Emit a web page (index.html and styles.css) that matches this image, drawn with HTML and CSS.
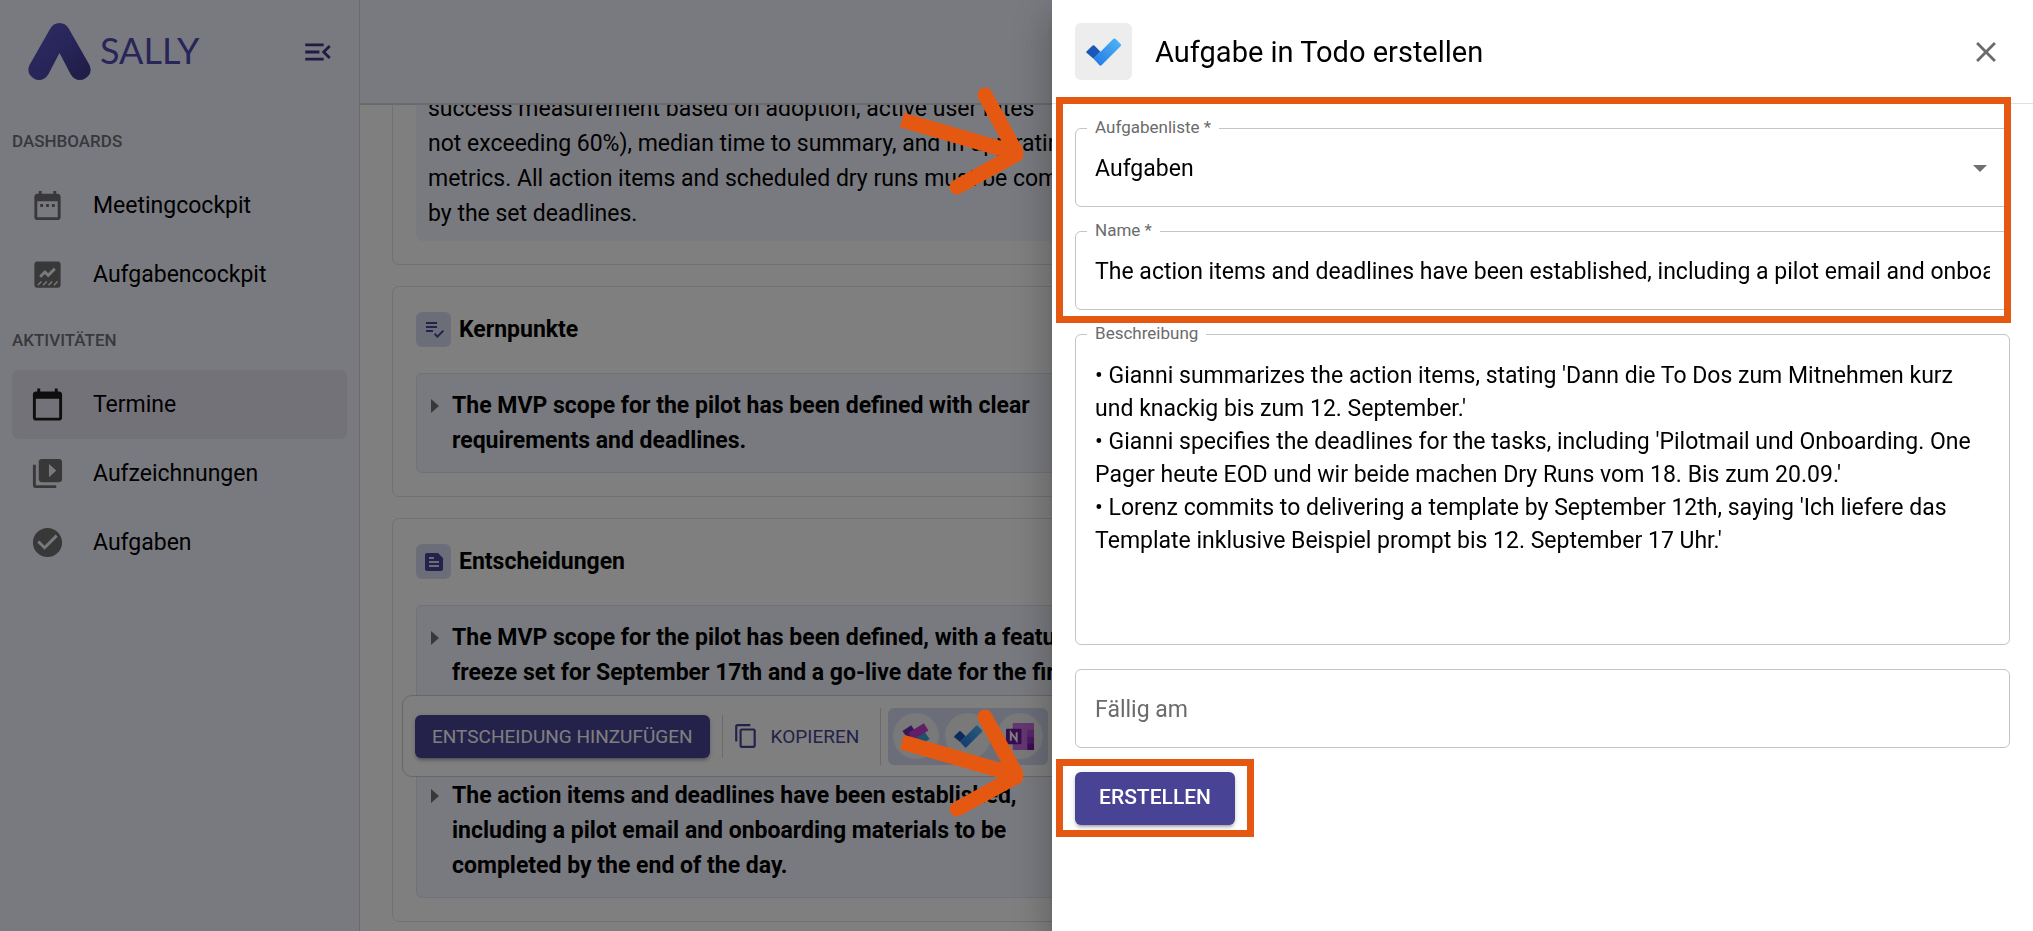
FILE: index.html
```html
<!DOCTYPE html>
<html lang="de">
<head>
    <meta charset="UTF-8">
    <meta name="viewport" content="width=device-width, initial-scale=1.0">
    <title>Sally - Aufgabe in Todo erstellen</title>
    <link rel="stylesheet" href="styles.css">
</head>
<body>
    <div class="app">
        <!-- Sidebar -->
        <aside class="sidebar">
            <div class="sidebar-head">
                <a href="#" class="brand">
                    <svg class="brand-mark" viewBox="0 0 63 57" aria-hidden="true">
                        <defs>
                            <linearGradient id="brandGradient" x1="0" y1="0" x2="1" y2="1">
                                <stop offset="0" stop-color="#5b58c4"/>
                                <stop offset="0.5" stop-color="#504ab4"/>
                                <stop offset="1" stop-color="#3e3788"/>
                            </linearGradient>
                        </defs>
                        <path fill="url(#brandGradient)" d="M22 6Q25 0 31.500 0Q38 0 41 6L61.500 42Q64 48 61 52Q57 57 52 57Q46 57 42.500 51L31.500 30L20.500 51Q17 57 11 57Q6 57 2 52Q-1 48 1.500 42Z"/>
                    </svg>
                    <span class="brand-name">SALLY</span>
                </a>
                <button type="button" class="icon-button collapse" aria-label="Menü einklappen">
                    <svg viewBox="0 0 24 24"><path d="M3 18h13v-2H3v2zm0-5h10v-2H3v2zm0-7v2h13V6H3zm18 9.590L17.420 12 21 8.410 19.590 7l-5 5 5 5L21 15.590z"/></svg>
                </button>
            </div>

            <nav>
                <h2 class="nav-title">DASHBOARDS</h2>
                <a href="#" class="nav-item">
                    <svg viewBox="0 0 24 24"><path d="M9 11H7v2h2v-2zm4 0h-2v2h2v-2zm4 0h-2v2h2v-2zm2-7h-1V2h-2v2H8V2H6v2H5c-1.110 0-1.990.9-1.990 2L3 20c0 1.100.890 2 2 2h14c1.100 0 2-.9 2-2V6c0-1.100-.9-2-2-2zm0 16H5V9h14v11z"/></svg>
                    Meetingcockpit
                </a>
                <a href="#" class="nav-item">
                    <svg viewBox="0 0 24 24">
                        <rect x="3" y="3" width="18" height="18" rx="2"/>
                        <path class="cut" d="M7 13.500l3.200-3.200 2.300 2.300L17 8"/>
                        <path class="cut thin" d="M5.300 19.300l2.500-2.500M9 19.300l2.500-2.500M12.700 19.300l2.500-2.500M16.400 19.300l2.500-2.500"/>
                    </svg>
                    Aufgabencockpit
                </a>
                <h2 class="nav-title">AKTIVITÄTEN</h2>
                <a href="#" class="nav-item active">
                    <svg viewBox="0 0 24 24"><path d="M20 3h-1V1h-2v2H7V1H5v2H4c-1.100 0-2 .9-2 2v16c0 1.100.9 2 2 2h16c1.100 0 2-.9 2-2V5c0-1.100-.9-2-2-2zm0 18H4V8h16v13z"/></svg>
                    Termine
                </a>
                <a href="#" class="nav-item">
                    <svg viewBox="0 0 24 24"><path d="M4 6H2v14c0 1.100.9 2 2 2h14v-2H4V6zm16-4H8c-1.100 0-2 .9-2 2v12c0 1.100.9 2 2 2h12c1.100 0 2-.9 2-2V4c0-1.100-.9-2-2-2zm-7 12.500v-9l5 4.500-5 4.500z"/></svg>
                    Aufzeichnungen
                </a>
                <a href="#" class="nav-item">
                    <svg viewBox="0 0 24 24"><path d="M12 2C6.480 2 2 6.480 2 12s4.480 10 10 10 10-4.480 10-10S17.520 2 12 2zm-2 15l-5-5 1.410-1.410L10 14.170l7.590-7.590L19 8l-9 9z"/></svg>
                    Aufgaben
                </a>
            </nav>
        </aside>

        <!-- Meeting summary -->
        <main class="content">
            <div class="topbar"></div>
            <div class="cards">
                <section class="card summary">
                    <p class="panel plain">
                        success measurement based on adoption, active user rates<br>
                        not exceeding 60%), median time to summary, and in-app rating<br>
                        metrics. All action items and scheduled dry runs must be completed<br>
                        by the set deadlines.
                    </p>
                </section>

                <section class="card">
                    <h3 class="card-title">
                        <span class="tile">
                            <svg viewBox="0 0 24 24"><path d="M14 10H3v2h11v-2zm0-4H3v2h11V6zM3 16h7v-2H3v2zm11.410 6L10.900 18.500l1.400-1.400 2.110 2.100 5.300-5.300 1.400 1.400L14.410 22z" transform="translate(1 -2)"/></svg>
                        </span>
                        Kernpunkte
                    </h3>
                    <div class="panel">
                        <div class="point">
                            <span class="caret"></span>
                            <p>The MVP scope for the pilot has been defined with clear<br>requirements and deadlines.</p>
                        </div>
                    </div>
                </section>

                <section class="card">
                    <h3 class="card-title">
                        <span class="tile">
                            <svg viewBox="0 0 24 24"><path d="M16 3H5c-1.100 0-2 .9-2 2v14c0 1.100.9 2 2 2h14c1.100 0 2-.9 2-2V8l-5-5zM7 7h5v2H7V7zm10 10H7v-2h10v2zm0-4H7v-2h10v2z"/></svg>
                        </span>
                        Entscheidungen
                    </h3>
                    <div class="panel">
                        <div class="point">
                            <span class="caret"></span>
                            <p>The MVP scope for the pilot has been defined, with a feature<br>freeze set for September 17th and a go-live date for the first</p>
                        </div>
                        <div class="point later">
                            <span class="caret"></span>
                            <p>The action items and deadlines have been established,<br>including a pilot email and onboarding materials to be<br>completed by the end of the day.</p>
                        </div>
                    </div>

                    <!-- Floating actions of the hovered decision -->
                    <div class="toolbar">
                        <button type="button" class="button add">ENTSCHEIDUNG HINZUFÜGEN</button>
                        <span class="divider"></span>
                        <button type="button" class="copy">
                            <svg viewBox="0 0 24 24"><path d="M16 1H4c-1.100 0-2 .9-2 2v14h2V3h12V1zm3 4H8c-1.100 0-2 .9-2 2v14c0 1.100.9 2 2 2h11c1.100 0 2-.9 2-2V7c0-1.100-.9-2-2-2zm0 16H8V7h11v14z"/></svg>
                            KOPIEREN
                        </button>
                        <span class="divider tall"></span>
                        <div class="exports">
                            <button type="button" class="export" aria-label="Loop">
                                <svg viewBox="0 0 30 30">
                                    <g stroke-width="9">
                                        <path stroke="#8b3fd0" d="M4 14l10 9"/>
                                        <path stroke="#6a2fb5" d="M3 13l9-6"/>
                                        <path stroke="#35a6dd" d="M13 23l13-9"/>
                                        <path stroke="#c43fd0" d="M9 15L25 5"/>
                                    </g>
                                </svg>
                            </button>
                            <button type="button" class="export" aria-label="Todo">
                                <svg viewBox="0 0 36 28"><use href="#todoMark"/></svg>
                            </button>
                            <button type="button" class="export" aria-label="OneNote">
                                <svg viewBox="0 0 30 30">
                                    <rect x="7" y="1" width="22" height="28" rx="1" fill="#c86ee0"/>
                                    <path fill="#ae4bd5" d="M22 8h7v7h-7z"/>
                                    <path fill="#9332bf" d="M22 15h7v7h-7z"/>
                                    <path fill="#7719aa" d="M22 22h7v7h-7z"/>
                                    <rect x="0" y="7" width="16" height="16" rx="1" fill="#6b1a9c"/>
                                    <path fill="none" stroke="#fff" stroke-width="2" d="M5 19.500V11l6 8V10.500"/>
                                </svg>
                            </button>
                        </div>
                    </div>
                </section>
            </div>
        </main>
    </div>

    <div class="backdrop"></div>

    <!-- Create task drawer -->
    <aside class="drawer">
        <header class="drawer-head">
            <span class="app-icon">
                <svg viewBox="0 0 36 28">
                    <defs>
                        <linearGradient id="todoLong" x1="0" y1="1" x2="1" y2="0">
                            <stop offset="0" stop-color="#2176e4"/>
                            <stop offset="1" stop-color="#52b9f5"/>
                        </linearGradient>
                    </defs>
                    <g id="todoMark">
                        <path fill="#1957b8" d="M0.500 13.500L6.300 7.700Q7.500 6.800 8.600 7.700L14.500 13.800L7.600 20.700L0.500 14.800Q0 14.200 0.500 13.500Z"/>
                        <path fill="url(#todoLong)" d="M7.600 20.700L27.400 0.800Q28.500 0 29.500 0.800L34.800 6.200Q35.500 7 34.800 8L15.500 27.300Q14.500 28 13.500 27.300Z"/>
                    </g>
                </svg>
            </span>
            <h1>Aufgabe in Todo erstellen</h1>
            <button type="button" class="icon-button close" aria-label="Schließen">
                <svg viewBox="0 0 24 24"><path d="M19 6.410L17.590 5 12 10.590 6.410 5 5 6.410 10.590 12 5 17.590 6.410 19 12 13.410 17.590 19 19 17.590 13.410 12z"/></svg>
            </button>
        </header>

        <form class="task-form">
            <div class="required-fields">
                <div class="field">
                    <label for="list">Aufgabenliste *</label>
                    <select id="list">
                        <option>Aufgaben</option>
                    </select>
                    <span class="select-arrow"></span>
                </div>
                <div class="field">
                    <label for="name">Name *</label>
                    <input type="text" id="name" value="The action items and deadlines have been established, including a pilot email and onboarding materials to be completed by the end of the day.">
                </div>
                <div class="highlight highlight-fields"></div>
                <svg class="arrow" viewBox="0 0 126 112" aria-hidden="true"><path d="M5 34L119 67"/><path class="head" d="M88 9L120 68L60 101"/></svg>
            </div>

            <div class="field">
                <label for="description">Beschreibung</label>
                <textarea id="description" rows="8">• Gianni summarizes the action items, stating 'Dann die To Dos zum Mitnehmen kurz und knackig bis zum 12. September.'
• Gianni specifies the deadlines for the tasks, including 'Pilotmail und Onboarding. One Pager heute EOD und wir beide machen Dry Runs vom 18. Bis zum 20.09.'
• Lorenz commits to delivering a template by September 12th, saying 'Ich liefere das Template inklusive Beispiel prompt bis 12. September 17 Uhr.'</textarea>
            </div>

            <div class="field">
                <input type="text" placeholder="Fällig am" aria-label="Fällig am">
            </div>

            <div class="submit">
                <button type="submit" class="button create">ERSTELLEN</button>
                <div class="highlight highlight-submit"></div>
                <svg class="arrow" viewBox="0 0 126 112" aria-hidden="true"><path d="M5 34L119 67"/><path class="head" d="M88 9L120 68L60 101"/></svg>
            </div>
        </form>
    </aside>
</body>
</html>
```
FILE: styles.css
```css
/* General Reset */
* {
    margin: 0;
    padding: 0;
    box-sizing: border-box;
}

body {
    font-family: Roboto, "Liberation Sans", sans-serif;
    font-size: 23px;
    color: #000;
    background-color: #fff;
    height: 100vh;
    overflow: hidden;
}

button,
input,
select,
textarea {
    font: inherit;
    color: inherit;
}

button {
    border: none;
    background: none;
    cursor: pointer;
}

svg {
    display: block;
    flex: none;
    fill: currentColor;
}

.app {
    display: flex;
    height: 100vh;
}

/* Sidebar */
.sidebar {
    flex: none;
    width: 360px;
    padding: 0 12px;
    background-color: #f3f5ff;
    border-right: 1px solid #d4d4d4;
}

.sidebar-head {
    display: flex;
    align-items: center;
    justify-content: space-between;
    height: 103px;
    margin-bottom: 7px;
    padding: 0 12px 0 16px;
}

.brand {
    display: flex;
    align-items: center;
    gap: 9px;
    color: #504ab4;
    text-decoration: none;
}

.brand-mark {
    width: 63px;
    height: 57px;
}

.brand-name {
    padding-bottom: 4px;
    font-family: Lato, sans-serif;
    font-size: 36px;
    line-height: 40px;
}

.icon-button svg {
    width: 34px;
    height: 34px;
}

.collapse {
    color: #3e3788;
}

.nav-title {
    height: 61px;
    font-size: 17px;
    font-weight: 500;
    line-height: 62px;
    color: #707078;
}

.nav-item {
    display: flex;
    align-items: center;
    gap: 28px;
    height: 69px;
    padding: 0 18px;
    border-radius: 6px;
    color: #000;
    text-decoration: none;
}

.nav-item svg {
    width: 35px;
    height: 35px;
    color: #707070;
}

.nav-item.active {
    background-color: #e9e5f3;
}

.nav-item.active svg {
    color: #1c1c1c;
}

.cut {
    fill: none;
    stroke: #f3f5ff;
    stroke-width: 2;
}

.thin {
    stroke-width: 1;
}

/* Content */
.content {
    flex: 1;
    min-width: 0;
    display: flex;
    flex-direction: column;
}

.topbar {
    flex: none;
    height: 105px;
    background-color: #f3f5ff;
    border-bottom: 2px solid #d4d4d8;
}

.cards {
    flex: 1;
    min-height: 0;
    overflow: hidden;
    display: flex;
    flex-direction: column;
    gap: 21px;
    padding: 0 32px;
    white-space: nowrap;
}

.card {
    flex: none;
    position: relative;
    padding: 25px 23px 23px;
    border: 1px solid #e2e2e2;
    border-radius: 7px;
}

.summary {
    padding-top: 0;
    margin-top: -14px;
    border-top: none;
}

.card-title {
    display: flex;
    align-items: center;
    gap: 8px;
    margin-bottom: 26px;
    font-size: 23px;
    font-weight: 700;
}

.tile {
    display: flex;
    align-items: center;
    justify-content: center;
    width: 35px;
    height: 35px;
    border-radius: 6px;
    background-color: #d6dbf2;
    color: #484394;
}

.tile svg {
    width: 24px;
    height: 24px;
}

.panel {
    padding: 14px 12px;
    border: 1px solid #e1e4f3;
    border-radius: 6px;
    background-color: #f3f5ff;
    line-height: 35px;
}

.plain {
    padding: 0 12px 10px;
    border: none;
}

.point {
    display: flex;
    gap: 13px;
    padding-left: 2px;
    font-weight: 700;
}

.later {
    margin-top: 88px;
}

.caret {
    flex: none;
    width: 8px;
    height: 14px;
    margin-top: 11px;
    background-color: #707070;
    clip-path: polygon(0 0, 100% 50%, 0 100%);
}

/* Toolbar */
.toolbar {
    position: absolute;
    top: 176px;
    left: 9px;
    display: flex;
    align-items: center;
    height: 82px;
    padding: 0 12px;
    border: 1px solid #cfcfcf;
    border-radius: 10px;
    background-color: #fff;
}

.button {
    border-radius: 6px;
    background-color: #484394;
    color: #fff;
    font-size: 19px;
    box-shadow: 0 4px 2px -3px rgba(0, 0, 0, 0.2), 0 3px 3px rgba(0, 0, 0, 0.14), 0 1px 7px rgba(0, 0, 0, 0.12);
}

.add {
    height: 43px;
    padding: 0 17px;
}

.divider {
    width: 1px;
    height: 43px;
    margin: 0 10px 0 12px;
    background-color: #d4d4d4;
}

.copy {
    display: flex;
    align-items: center;
    gap: 12px;
    color: #484394;
    font-size: 19px;
}

.copy svg {
    width: 26px;
    height: 26px;
}

.tall {
    height: 57px;
    margin: 0 7px 0 21px;
}

.exports {
    display: flex;
    align-items: center;
    gap: 6px;
    height: 57px;
    padding: 0 5px;
    border-radius: 6px;
    background-color: #d6dbf2;
}

.export {
    display: flex;
    align-items: center;
    justify-content: center;
    width: 46px;
    height: 46px;
    border-radius: 50%;
    background-color: #f2f2f5;
}

.export svg {
    width: 29px;
    height: 29px;
}

.backdrop {
    position: fixed;
    inset: 0;
    background-color: rgba(0, 0, 0, 0.5);
}

/* Drawer */
.drawer {
    position: fixed;
    top: 0;
    right: 0;
    bottom: 0;
    width: 48.25%;
    background-color: #fff;
    box-shadow: 0 12px 14px -7px rgba(0, 0, 0, 0.2), 0 23px 35px 3px rgba(0, 0, 0, 0.14), 0 9px 43px 7px rgba(0, 0, 0, 0.12);
}

.drawer-head {
    display: flex;
    align-items: center;
    gap: 23px;
    height: 104px;
    padding: 0 30px 0 23px;
    border-bottom: 1px solid #e0e0e0;
}

.app-icon {
    display: flex;
    align-items: center;
    justify-content: center;
    width: 57px;
    height: 57px;
    border-radius: 6px;
    background-color: #ededed;
}

.app-icon svg {
    width: 36px;
    height: 28px;
}

.drawer-head h1 {
    flex: 1;
    font-size: 29px;
    font-weight: 400;
}

.close {
    color: #6b6b6b;
}

.task-form {
    display: flex;
    flex-direction: column;
    gap: 24px;
    padding: 24px 23px;
}

.required-fields {
    position: relative;
    display: flex;
    flex-direction: column;
    gap: 24px;
}

.field {
    position: relative;
}

.field label {
    position: absolute;
    top: -11px;
    left: 12px;
    padding: 0 8px;
    background-color: #fff;
    color: #6b6b6b;
    font-size: 17px;
    line-height: 20px;
}

.field input,
.field select,
.field textarea {
    display: block;
    width: 100%;
    height: 79px;
    padding: 2px 19px 0;
    border: 1px solid #c4c4c4;
    border-radius: 6px;
    background-color: #fff;
    outline: none;
    appearance: none;
}

.field textarea {
    height: auto;
    padding: 24px 19px 21px;
    line-height: 33px;
    resize: none;
    overflow: hidden;
}

.field input::placeholder {
    color: #6b6b6b;
    opacity: 1;
}

.select-arrow {
    position: absolute;
    top: 37px;
    right: 23px;
    width: 14px;
    height: 7px;
    background-color: #707070;
    clip-path: polygon(0 0, 100% 0, 50% 100%);
    pointer-events: none;
}

.submit {
    position: relative;
    align-self: flex-start;
}

.create {
    display: block;
    height: 53px;
    padding: 0 24px 4px;
    font-size: 21px;
    font-weight: 500;
}

/* Callouts */
.highlight {
    position: absolute;
    border: 7px solid #e55812;
    pointer-events: none;
}

.highlight-fields {
    inset: -31px -1px -13px -19px;
}

.highlight-submit {
    inset: -13px -19px -12px -19px;
}

.arrow {
    position: absolute;
    top: -42px;
    left: -178px;
    width: 126px;
    height: 112px;
    fill: none;
    stroke: #e55812;
    stroke-width: 15;
}

.submit .arrow {
    top: -64px;
}

.head {
    stroke-linecap: round;
    stroke-linejoin: round;
}
```
